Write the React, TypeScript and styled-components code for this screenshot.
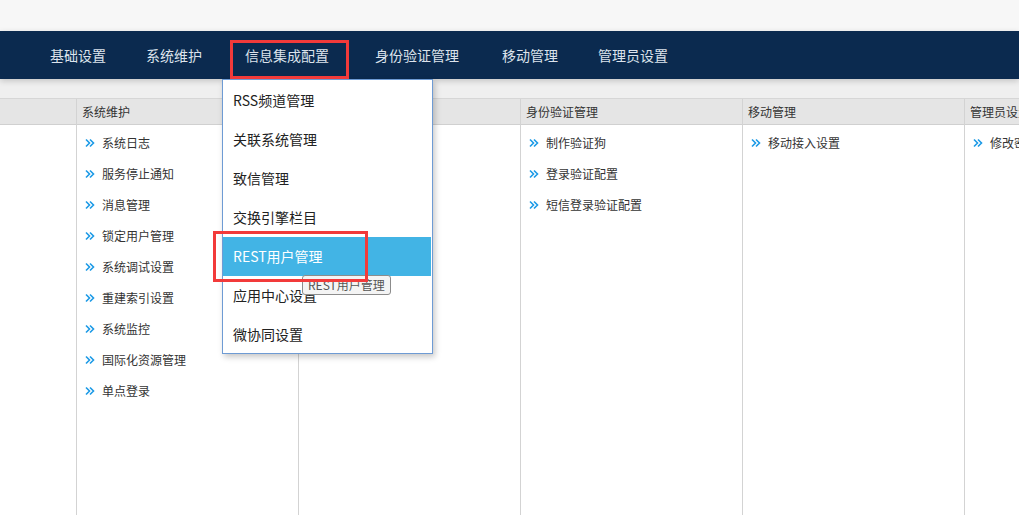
import React from 'react';
import styled, { createGlobalStyle } from 'styled-components';

const GlobalStyle = createGlobalStyle`
  html, body {
    margin: 0;
    padding: 0;
    background: #ffffff;
    font-family: "Noto Sans CJK SC", "Microsoft YaHei", "Noto Sans", sans-serif;
  }
  #root {
    height: 515px;
  }
`;

const Page = styled.div`
  width: 1019px;
  height: 515px;
  overflow: hidden;
  display: flex;
  flex-direction: column;
  background: #ffffff;
`;

const TopBand = styled.div`
  height: 31px;
  flex: none;
  background: #f7f7f7;
`;

const NavBar = styled.nav`
  height: 48px;
  flex: none;
  background: #0b2a4f;
  display: flex;
  align-items: stretch;
  padding-left: 30px;
  position: relative;
  z-index: 5;
  box-shadow: 0 2px 6px rgba(0, 0, 0, 0.18);
`;

const NavItem = styled.div<{ $active?: boolean; $wide?: boolean }>`
  position: relative;
  display: flex;
  align-items: center;
  padding: ${({ $active, $wide }) => ($active ? '0 26px 0 23px' : $wide ? '0 23px 0 20px' : '0 20px')};
  font-size: 14px;
  line-height: 20px;
  color: #dce3ec;
  white-space: nowrap;
  cursor: pointer;
`;

const Annotation = styled.div<{ $top: number; $left: number; $width: number; $height: number }>`
  position: absolute;
  top: ${({ $top }) => $top}px;
  left: ${({ $left }) => $left}px;
  width: ${({ $width }) => $width}px;
  height: ${({ $height }) => $height}px;
  border: 3px solid #f23a3a;
  box-sizing: border-box;
  pointer-events: none;
  z-index: 20;
`;

const Dropdown = styled.ul`
  position: absolute;
  top: 48px;
  left: 0;
  width: 211px;
  height: 275px;
  box-sizing: border-box;
  margin: 0;
  padding: 1px 1px 0 0;
  list-style: none;
  background: #ffffff;
  border: 1px solid #6e9bd4;
  box-shadow: 2px 3px 6px rgba(0, 0, 0, 0.22);
  z-index: 10;
`;

const DropItem = styled.li<{ $hover?: boolean }>`
  position: relative;
  height: 39px;
  line-height: 39px;
  padding-left: 10px;
  font-size: 14px;
  color: ${({ $hover }) => ($hover ? '#ffffff' : '#222222')};
  background: ${({ $hover }) => ($hover ? '#42b4e5' : 'transparent')};
  white-space: nowrap;
`;

const Tooltip = styled.span`
  position: absolute;
  top: 38px;
  left: 79px;
  height: 20px;
  line-height: 18px;
  box-sizing: border-box;
  padding: 0 5px;
  font-size: 12px;
  color: #555555;
  background: #f4f4f4;
  border: 1px solid #8c8c8c;
  border-radius: 3px;
  z-index: 12;
`;

const Body = styled.div`
  flex: 1;
  display: flex;
  flex-direction: column;
  min-height: 0;
`;

const Strip = styled.div`
  height: 19px;
  flex: none;
  background: #efefef;
  border-bottom: 1px solid #d6d6d6;
`;

const Columns = styled.div`
  flex: 1;
  display: grid;
  grid-template-columns: repeat(6, 222px);
  margin-left: -146px;
  min-height: 0;
`;

const Column = styled.section`
  display: flex;
  flex-direction: column;
  border-left: 1px solid #d3d3d3;
  min-width: 0;
`;

const ColumnHeader = styled.div`
  height: 25px;
  flex: none;
  line-height: 25px;
  padding-left: 5px;
  font-size: 12px;
  color: #333333;
  background: #e5e5e5;
  border-bottom: 1px solid #d0d0d0;
  white-space: nowrap;
  overflow: hidden;
`;

const ItemList = styled.ul`
  margin: 0;
  padding: 2px 0 0 8px;
  list-style: none;
`;

const Item = styled.li`
  display: flex;
  align-items: center;
  gap: 7px;
  height: 31px;
  font-size: 12px;
  color: #333333;
  white-space: nowrap;
`;

const Arrow = () => (
  <svg width="10" height="10" viewBox="0 0 10 10" fill="none">
    <path d="M1 1.5 L4.5 5 L1 8.5 M5 1.5 L8.5 5 L5 8.5" stroke="#1c9ae6" strokeWidth="1.6" />
  </svg>
);

const navItems = ['基础设置', '系统维护', '信息集成配置', '身份验证管理', '移动管理', '管理员设置'];

const dropItems = ['RSS频道管理', '关联系统管理', '致信管理', '交换引擎栏目', 'REST用户管理', '应用中心设置', '微协同设置'];

const columns: { title: string; items: string[] }[] = [
  { title: '基础设置', items: [] },
  {
    title: '系统维护',
    items: ['系统日志', '服务停止通知', '消息管理', '锁定用户管理', '系统调试设置', '重建索引设置', '系统监控', '国际化资源管理', '单点登录'],
  },
  { title: '信息集成配置', items: [] },
  { title: '身份验证管理', items: ['制作验证狗', '登录验证配置', '短信登录验证配置'] },
  { title: '移动管理', items: ['移动接入设置'] },
  { title: '管理员设置', items: ['修改密码'] },
];

const App: React.FC = () => {
  return (
    <>
      <GlobalStyle />
      <Page>
        <TopBand />
        <NavBar>
          {navItems.map((label) => {
            const active = label === '信息集成配置';
            return (
              <NavItem key={label} $active={active} $wide={label === '身份验证管理'}>
                {label}
                {active && (
                  <>
                    <Annotation $top={9} $left={8} $width={119} $height={39} />
                    <Dropdown>
                      {dropItems.map((d) => (
                        <DropItem key={d} $hover={d === 'REST用户管理'}>
                          {d}
                          {d === 'REST用户管理' && <Tooltip>REST用户管理</Tooltip>}
                        </DropItem>
                      ))}
                    </Dropdown>
                    <Annotation $top={200} $left={-9} $width={155} $height={51} />
                  </>
                )}
              </NavItem>
            );
          })}
        </NavBar>
        <Body>
          <Strip />
          <Columns>
            {columns.map((col) => (
              <Column key={col.title}>
                <ColumnHeader>{col.title}</ColumnHeader>
                <ItemList>
                  {col.items.map((it) => (
                    <Item key={it}>
                      <Arrow />
                      {it}
                    </Item>
                  ))}
                </ItemList>
              </Column>
            ))}
          </Columns>
        </Body>
      </Page>
    </>
  );
};

export default App;
